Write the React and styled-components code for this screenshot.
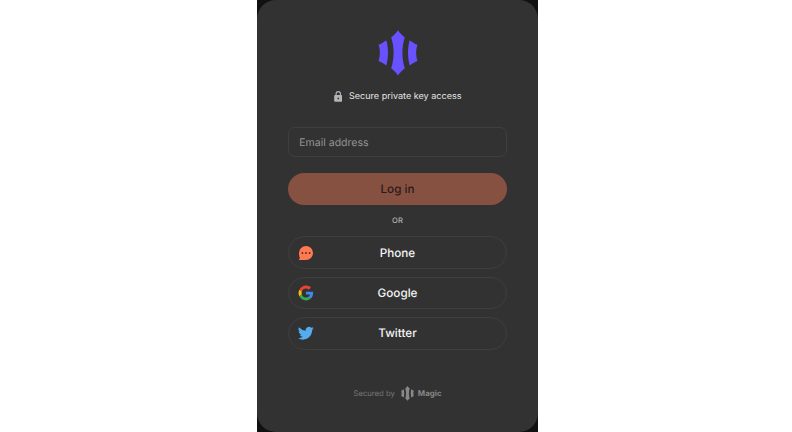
import React from "react";
import styled, { createGlobalStyle } from "styled-components";

const GlobalStyle = createGlobalStyle`
  * { box-sizing: border-box; }
  body {
    margin: 0;
    background: #fff;
    font-family: Inter, "Liberation Sans", sans-serif;
    text-rendering: geometricPrecision;
  }
  input, button { text-rendering: inherit; }
`;

const Page = styled.main`
  display: flex;
  height: 432px;
  padding-left: 257px;
  background: #fff;
`;

const Backdrop = styled.div`
  width: 281px;
  height: 432px;
  background: #111;
`;

const Card = styled.section`
  display: flex;
  flex-direction: column;
  align-items: center;
  height: 432px;
  padding: 30px 31px 0;
  border-radius: 19px;
  background: #323232;
`;

const Tagline = styled.div`
  display: flex;
  align-items: center;
  gap: 7px;
  height: 14px;
  margin-top: 13px;
  color: #e6e6e6;
  font-size: 9.05px;
  line-height: 14px;
  white-space: nowrap;
  span { padding-top: 2px; }
`;

const EmailInput = styled.input`
  width: 218.4px;
  height: 30.4px;
  margin-top: 24px;
  padding: 0 10px;
  border: 1px solid #3f3f3f;
  border-radius: 7px;
  outline: none;
  background: transparent;
  color: #fff;
  font: 400 10.5px Inter, sans-serif;
  &::placeholder { color: #949494; opacity: 1; }
`;

const LoginButton = styled.button`
  width: 218.4px;
  height: 32.5px;
  flex: none;
  margin-top: 15.2px;
  padding: 0;
  border: 0;
  border-radius: 17px;
  background: #875141;
  color: #291b18;
  font: 500 11.7px Inter, sans-serif;
`;

const Divider = styled.div`
  height: 12px;
  margin: 9.7px 0 9.6px;
  color: #b5b5b5;
  font-size: 7.6px;
  font-weight: 500;
  line-height: 12px;
  letter-spacing: 0.2px;
`;

const Providers = styled.div`
  display: flex;
  flex-direction: column;
  gap: 7.4px;
`;

const ProviderButton = styled.button`
  display: grid;
  grid-template-columns: 16px 1fr 16px;
  align-items: center;
  width: 218.4px;
  height: 32.8px;
  padding: 0 8.5px;
  border: 1px solid #3f3f3f;
  border-radius: 17px;
  background: transparent;
  color: #f5f5f5;
  font: 500 11.7px Inter, sans-serif;
  svg { display: block; }
`;

const Footer = styled.footer`
  display: flex;
  align-items: center;
  height: 16px;
  margin-top: 35.5px;
  color: #777;
  font-size: 7.7px;
  white-space: nowrap;
`;

const FooterMark = styled.span`
  display: flex;
  margin: 0 4px 0 6px;
`;

const Brand = styled.strong`
  color: #888;
  font-size: 7.9px;
  font-weight: 700;
`;

function MagicMark({ width, height, color }) {
  return (
    <svg width={width} height={height} viewBox="0 0 40 46" fill={color} aria-hidden="true">
      <path d="M20 .3C21.8 3 24 5.4 26.8 7.5C25.2 12.4 24.4 17.5 24.4 22.8S25.2 33.3 26.8 38.2C24 40.3 21.8 42.7 20 45.5C18.2 42.7 16 40.3 13.2 38.2C14.8 33.3 15.6 28.1 15.6 22.8S14.8 12.4 13.2 7.5C16 5.4 18.2 3 20 .3Z" />
      <path d="M8.3 10.2C9.4 14.1 10 18.3 10 22.8S9.4 31.6 8.3 35.5C6 33.6 3.4 32 .6 30.9C1.4 28.3 1.9 25.6 1.9 22.8S1.4 17.4 .6 14.8C3.4 13.7 6 12.1 8.3 10.2Z" />
      <path d="M31.7 10.2C30.6 14.1 30 18.3 30 22.8S30.6 31.6 31.7 35.5C34 33.6 36.6 32 39.4 30.9C38.6 28.3 38.1 25.6 38.1 22.8S38.6 17.4 39.4 14.8C36.6 13.7 34 12.1 31.7 10.2Z" />
    </svg>
  );
}

function LockIcon() {
  return (
    <svg width="8.5" height="11" viewBox="0 0 9 11" preserveAspectRatio="none" aria-hidden="true">
      <path d="M2.2 5V2.9a2.3 2.3 0 0 1 4.6 0V5" fill="none" stroke="#b5b4b7" strokeWidth="1.15" />
      <rect x=".2" y="4" width="8.6" height="6.8" rx="1.1" fill="#b5b4b7" />
      <circle cx="4.5" cy="7.4" r=".9" fill="#323232" />
    </svg>
  );
}

function PhoneIcon() {
  return (
    <svg width="16" height="16" viewBox="0 0 16 16" aria-hidden="true">
      <path d="M8 1a7 7 0 1 1 0 14H1.4c-.5 0-.6-.4-.3-.7l.9-1.2c-.6-1.1-1-2.7-1-5.1A7 7 0 0 1 8 1Z" fill="#ff7a50" />
      <g fill="#51291f">
        <circle cx="4.4" cy="8" r=".9" />
        <circle cx="8" cy="8" r=".9" />
        <circle cx="11.6" cy="8" r=".9" />
      </g>
    </svg>
  );
}

function GoogleIcon() {
  return (
    <svg width="16" height="16" viewBox="-2 -2 52 52" aria-hidden="true">
      <path fill="#ea4335" d="M24 9.5c3.5 0 6.7 1.2 9.2 3.6l6.9-6.9C35.9 2.4 30.5 0 24 0 14.6 0 6.5 5.4 2.6 13.2l8 6.2C12.4 13.7 17.7 9.5 24 9.5Z" />
      <path fill="#4285f4" d="M47 24.6c0-1.6-.2-3.1-.4-4.6H24v9h12.9c-.6 3-2.2 5.5-4.7 7.2l7.7 6C44.4 38 47 31.8 47 24.6Z" />
      <path fill="#fbbc05" d="M10.5 28.6a14.5 14.5 0 0 1 0-9.2l-8-6.2a24 24 0 0 0 0 21.6l8-6.2Z" />
      <path fill="#34a853" d="M24 48c6.5 0 11.9-2.1 15.9-5.8l-7.7-6c-2.2 1.5-4.9 2.3-8.2 2.3-6.3 0-11.6-4.2-13.5-9.9l-8 6.2C6.5 42.6 14.6 48 24 48Z" />
    </svg>
  );
}

function TwitterIcon() {
  return (
    <svg width="16" height="16" viewBox="0 0 24 24" aria-hidden="true">
      <path fill="#55acee" d="M23.64 4.94a9.7 9.7 0 0 1-2.8.77 4.9 4.9 0 0 0 2.14-2.7 9.8 9.8 0 0 1-3.1 1.19 4.87 4.87 0 0 0-8.3 4.44A13.83 13.83 0 0 1 1.54 3.55a4.87 4.87 0 0 0 1.51 6.5 4.85 4.85 0 0 1-2.2-.61v.06a4.88 4.88 0 0 0 3.9 4.78 4.9 4.9 0 0 1-2.2.08 4.88 4.88 0 0 0 4.55 3.39A9.78 9.78 0 0 1 0 19.76a13.8 13.8 0 0 0 7.48 2.2c8.97 0 14-7.57 13.69-14.55a9.9 9.9 0 0 0 2.47-2.47Z" />
    </svg>
  );
}

const providers = [
  { name: "Phone", Icon: PhoneIcon },
  { name: "Google", Icon: GoogleIcon },
  { name: "Twitter", Icon: TwitterIcon },
];

export default function App() {
  return (
    <Page>
      <GlobalStyle />
      <Backdrop>
        <Card>
          <MagicMark width="40" height="46" color="#6851ff" />
          <Tagline><LockIcon /><span>Secure private key access</span></Tagline>
          <EmailInput type="email" placeholder="Email address" aria-label="Email address" />
          <LoginButton type="button">Log in</LoginButton>
          <Divider>OR</Divider>
          <Providers>
            {providers.map(({ name, Icon }) => (
              <ProviderButton type="button" key={name}><Icon /><span>{name}</span></ProviderButton>
            ))}
          </Providers>
          <Footer>
            <span>Secured by</span>
            <FooterMark><MagicMark width="13" height="15" color="#888" /></FooterMark>
            <Brand>Magic</Brand>
          </Footer>
        </Card>
      </Backdrop>
    </Page>
  );
}
